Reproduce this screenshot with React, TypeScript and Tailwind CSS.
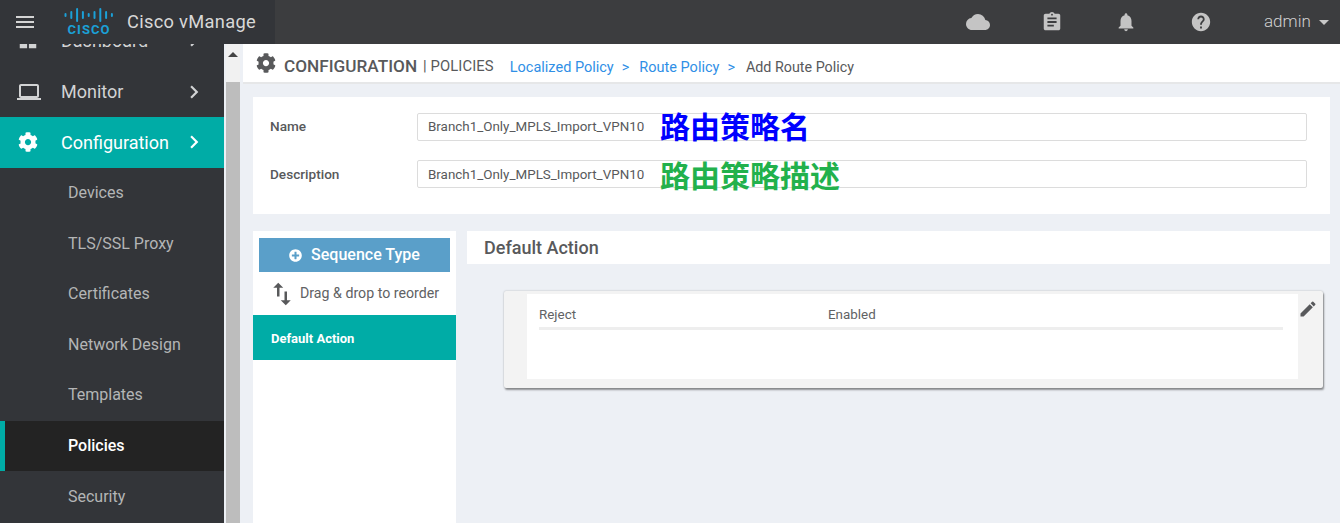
import { FaCog, FaPlusCircle } from 'react-icons/fa';
import {
  MdAssignment,
  MdChevronRight,
  MdCloud,
  MdDashboard,
  MdEdit,
  MdHelp,
  MdLaptop,
  MdMenu,
  MdNotifications,
  MdSwapVert,
} from 'react-icons/md';

const font = { fontFamily: 'Roboto, "Noto Sans CJK SC", sans-serif' };

const subItems = ['Devices', 'TLS/SSL Proxy', 'Certificates', 'Network Design', 'Templates', 'Policies', 'Security'];

const CiscoLogo = () => {
  const bars = [4, 8, 14, 8, 4, 8, 14, 8, 4];
  return (
    <div className="flex w-[50px] flex-col items-center">
      <svg width="50" height="14" viewBox="0 0 50 14" className="text-[#1ba0d7]">
        {bars.map((h, i) => (
          <rect key={i} x={0.5 + i * 5.8} y={(14 - h) / 2} width="2" height={h} rx="1" fill="currentColor" />
        ))}
      </svg>
      <span className="mt-[2px] text-[13px] leading-[12px] font-bold tracking-[1px] text-[#1ba0d7]">CISCO</span>
    </div>
  );
};

const SidebarRow = ({ label, icon, active }: { label: string; icon: React.ReactNode; active?: boolean }) => (
  <div className={`flex h-[50.6px] items-center pr-[18px] pl-[17px] ${active ? 'bg-[#00aca6] text-white' : 'text-[#d2d3d4]'}`}>
    <span className="flex w-[44px] items-center">{icon}</span>
    <span className="flex-1 text-[18px]">{label}</span>
    <MdChevronRight size={26} className="-mr-[1px]" />
  </div>
);

const App = () => {
  return (
    <div className="flex h-[523px] w-[1340px] flex-col overflow-hidden bg-[#edf0f5]" style={font}>
      <header className="flex h-[44px] shrink-0 items-center bg-[#3c3d3f]">
        <div className="flex h-full w-[275px] items-center bg-[#333539]">
          <MdMenu size={24} className="ml-[13px] text-[#d4d4d4]" />
          <div className="ml-[27px]">
            <CiscoLogo />
          </div>
          <span className="ml-[13px] text-[18.3px] tracking-[0.3px] text-[#d8d8d8]">Cisco vManage</span>
        </div>
        <div className="flex flex-1 items-center text-[#c4c4c4]">
          <MdCloud size={24} className="ml-[691px]" />
          <MdAssignment size={22} className="ml-[51px]" />
          <MdNotifications size={22} className="ml-[52px]" />
          <MdHelp size={22} className="ml-[53px]" />
          <span className="ml-[52px] text-[17px] font-light text-[#d0d0d0]">admin</span>
          <span className="ml-[8px] h-0 w-0 border-x-[5px] border-t-[5px] border-x-transparent border-t-[#c8c8c8]" />
        </div>
      </header>

      <div className="flex min-h-0 flex-1">
        <aside className="w-[224px] shrink-0 overflow-hidden bg-[#333539]">
          <div className="-mt-[29px]">
            <SidebarRow label="Dashboard" icon={<MdDashboard size={22} />} />
            <div className="h-[1px]" />
            <SidebarRow label="Monitor" icon={<MdLaptop size={24} />} />
            <SidebarRow label="Configuration" active icon={<FaCog size={20} className="ml-[1px]" />} />
            {subItems.map((item) =>
              item === 'Policies' ? (
                <div key={item} className="flex h-[50.6px] items-center border-l-[5px] border-[#00aca6] bg-[#232323] pl-[63px] text-[16px] font-medium text-white">
                  {item}
                </div>
              ) : (
                <div key={item} className="flex h-[50.6px] items-center pl-[68px] text-[16px] text-[#b4b5b6]">
                  {item}
                </div>
              ),
            )}
          </div>
        </aside>

        <div className="ml-[2px] flex w-[14px] shrink-0 flex-col bg-[#f1f1f1]">
          <div className="flex h-[38px] justify-center pt-[8px]">
            <span className="h-0 w-0 border-x-[5px] border-b-[5px] border-x-transparent border-b-[#444]" />
          </div>
          <div className="flex-1 bg-[#bdbdbd]" />
        </div>

        <main className="relative ml-[3px] min-w-0 flex-1">
          <div className="flex h-[40px] items-center border-b-2 border-[#e6e7e8] bg-white pt-[7px] pl-[13px] text-[14.5px]">
            <FaCog size={20} className="-mt-[7px] text-[#58595b]" />
            <span className="ml-[8px] text-[17.2px] font-medium text-[#58595b]">CONFIGURATION</span>
            <span className="ml-[6px] text-[14.8px] tracking-[0.1px] text-[#58595b]">| POLICIES</span>
            <span className="ml-[16px] pt-[2px] text-[#2f8fe6]">Localized Policy</span>
            <span className="ml-[8px] pt-[2px] text-[#2f8fe6]">&gt;</span>
            <span className="ml-[10px] pt-[2px] text-[#2f8fe6]">Route Policy</span>
            <span className="ml-[8px] pt-[2px] text-[#2f8fe6]">&gt;</span>
            <span className="ml-[11px] pt-[2px] text-[14.3px] text-[#58595b]">Add Route Policy</span>
          </div>

          <section className="mt-[13px] mr-[10px] ml-[10px] h-[117px] bg-white px-[17px] pt-[16px]">
            <div className="flex h-[28px] items-center">
              <span className="w-[147px] pb-[2px] text-[13.6px] font-medium text-[#58595b]">Name</span>
              <div className="mr-[6px] flex h-full flex-1 items-center rounded-[2px] border border-[#dcdcdc] pl-[10px] text-[13.4px] text-[#58595b]">
                Branch1_Only_MPLS_Import_VPN10
              </div>
            </div>
            <div className="mt-[19px] flex h-[28px] items-center">
              <span className="w-[147px] text-[13.6px] font-medium text-[#58595b]">Description</span>
              <div className="mr-[6px] flex h-full flex-1 items-center rounded-[2px] border border-[#dcdcdc] pt-[2px] pl-[10px] text-[13.4px] text-[#58595b]">
                Branch1_Only_MPLS_Import_VPN10
              </div>
            </div>
          </section>

          <div className="mt-[17px] ml-[10px] flex h-[300px] gap-[11px]">
            <div className="w-[203px] shrink-0 bg-white pt-[7px]">
              <div className="mx-[6px] flex h-[34px] items-center justify-center bg-[#5a9fc9] text-[16px] font-medium text-white">
                <FaPlusCircle size={13} className="mr-[9px]" />
                Sequence Type
              </div>
              <div className="flex h-[43px] items-center pl-[14px] text-[14.2px] text-[#616264]">
                <MdSwapVert size={30} className="mr-[3px] text-[#58595b]" />
                Drag &amp; drop to reorder
              </div>
              <div className="flex h-[45px] items-center bg-[#00aca6] pt-[2px] pl-[18px] text-[13px] font-bold text-white">Default Action</div>
            </div>
            <div className="mr-[10px] min-w-0 flex-1">
              <div className="flex h-[33px] items-center bg-white pb-[1px] pl-[17px] text-[18px] font-medium text-[#58595b]">Default Action</div>
              <div className="mt-[27px] ml-[37px] flex h-[97px] w-[819px] items-start rounded-[2px] bg-[#f3f3f3] pt-[3px] shadow-[1px_2px_2px_rgba(0,0,0,0.4),0_0_2px_rgba(0,0,0,0.25)]">
                <div className="ml-[23px] h-[85px] w-[771px] shrink-0 bg-white pr-[15px] pl-[12px]">
                  <div className="flex h-[36px] items-center border-b-[3px] border-[#eeeeee] pt-[9px] text-[13.4px] text-[#616264]">
                    <span className="w-[289px]">Reject</span>
                    <span>Enabled</span>
                  </div>
                </div>
                <MdEdit size={20} className="mt-[5px] shrink-0 text-[#58595b]" />
              </div>
            </div>
          </div>

          <span className="absolute top-[66px] left-[417px] text-[30px] leading-[36px] font-bold text-[#0000ff]">路由策略名</span>
          <span className="absolute top-[115px] left-[417px] text-[30px] leading-[36px] font-bold text-[#22b14c]">路由策略描述</span>
        </main>
      </div>
    </div>
  );
};

export default App;
